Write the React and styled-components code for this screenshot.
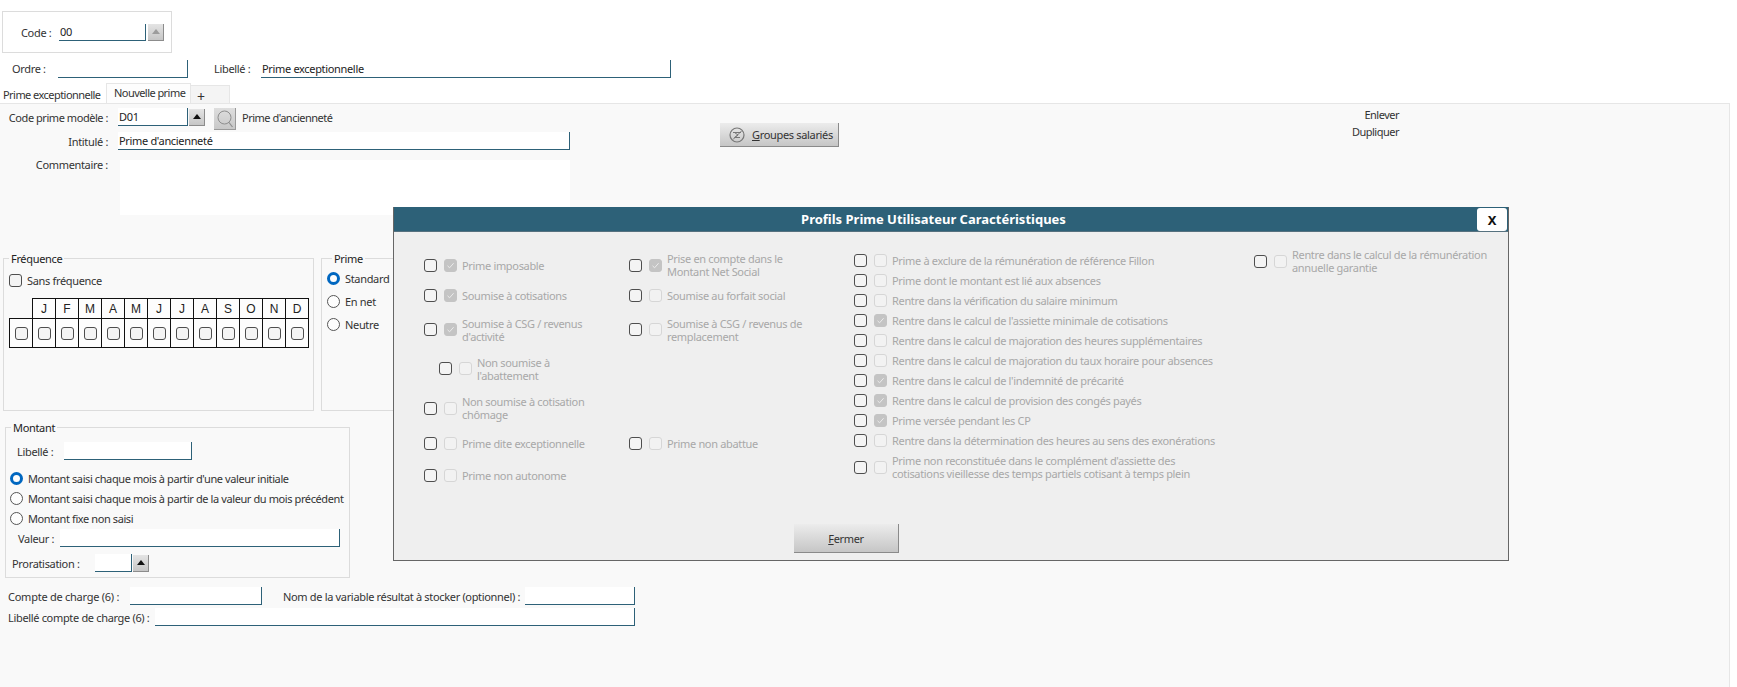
import React from "react";
import styled, { createGlobalStyle } from "styled-components";

const FONT = `"Noto Sans", "Liberation Sans", sans-serif`;
const TEAL = "#2d6178";

const Global = createGlobalStyle`
  html, body { margin: 0; padding: 0; background: #fff; }
  * { box-sizing: border-box; }
`;

const Page = styled.div`
  position: relative;
  width: 1737px;
  height: 687px;
  overflow: hidden;
  display: flex;
  flex-direction: column;
  font: 11px/13px ${FONT};
  letter-spacing: -0.33px;
  color: #333;
  background: #fff;
`;

const CodeBox = styled.div`
  display: flex;
  align-items: center;
  width: 170px;
  height: 42px;
  margin: 11px 0 0 2px;
  padding: 0 0 0 18px;
  border: 1px solid #dcdcdc;
`;

const Label = styled.span`
  flex: none;
  width: ${(p) => (p.$w ? `${p.$w}px` : "auto")};
  margin-left: ${(p) => p.$ml || 0}px;
  margin-right: ${(p) => p.$mr || 0}px;
  letter-spacing: ${(p) => p.$ls || "inherit"};
  text-align: ${(p) => (p.$right ? "right" : "left")};
  white-space: nowrap;
`;

const Input = styled.input`
  flex: none;
  display: block;
  width: ${(p) => p.$w}px;
  height: ${(p) => p.$h || 18}px;
  margin-left: ${(p) => p.$ml || 0}px;
  padding: 0 1px;
  border: 0;
  border-right: 1px solid ${TEAL};
  border-bottom: 1px solid ${TEAL};
  background: #fff;
  font: inherit;
  letter-spacing: inherit;
  color: #222;
  outline: none;
`;

const Spin = styled.button`
  flex: none;
  display: flex;
  align-items: center;
  justify-content: center;
  width: 16px;
  height: 17px;
  margin-left: ${(p) => p.$ml ?? 1}px;
  padding: 0;
  border: 0;
  border-right: 1px solid #8c8c8c;
  border-bottom: 1px solid #8c8c8c;
  background: linear-gradient(#e4e4e4, #c6c6c6);
  &::before {
    content: "";
    border-left: 4px solid transparent;
    border-right: 4px solid transparent;
    border-bottom: 5px solid ${(p) => (p.$disabled ? "#9c9c9c" : "#111")};
  }
`;

const TopRow = styled.div`
  display: flex;
  align-items: center;
  height: 17px;
  margin-top: 7px;
  padding-left: 12px;
`;

const TabBar = styled.div`
  display: flex;
  align-items: flex-end;
  height: 20px;
  margin-top: 6px;
  letter-spacing: -0.55px;
`;

const Tab = styled.div`
  display: flex;
  align-items: center;
  height: ${(p) => (p.$active ? 20 : 18)}px;
  width: ${(p) => p.$w}px;
  padding: ${(p) => (p.$active ? "0 0 3px 7px" : "0 0 0 3px")};
  background: ${(p) => (p.$active ? "#fdfdfd" : p.$plain ? "#fff" : "#f4f4f4")};
  border: 1px solid #e6e6e6;
  border-width: ${(p) => (p.$active ? "1px 1px 0 1px" : p.$plain ? "0" : "1px 1px 0 0")};
  white-space: nowrap;
`;

const PlusSign = styled.span`
  font-size: 14px;
  margin: 3px 0 0 3px;
`;

const Panel = styled.div`
  flex: 1;
  width: 1730px;
  display: flex;
  flex-direction: column;
  background: #f9f9f9;
  border-top: 1px solid #e6e6e6;
  border-right: 1px solid #e6e6e6;
`;

const Header = styled.div`
  display: flex;
  height: 148px;
`;

const FormCol = styled.div`
  width: 570px;
  flex: none;
  padding-top: 4px;
`;

const FormRow = styled.div`
  display: flex;
  align-items: ${(p) => (p.$top ? "flex-start" : "center")};
  height: ${(p) => p.$h || 18}px;
  margin-top: ${(p) => p.$mt || 0}px;
`;

const FormLabel = styled(Label)`
  width: 108px;
  text-align: right;
  margin-right: 10px;
`;

const CommentLabel = styled(FormLabel)`
  margin-top: -2px;
`;

const Comment = styled.textarea`
  display: block;
  width: 450px;
  height: 55px;
  margin-left: 2px;
  border: 0;
  background: #fff;
  resize: none;
  outline: none;
`;

const SearchBtn = styled.button`
  flex: none;
  display: flex;
  align-items: center;
  justify-content: center;
  width: 22px;
  height: 22px;
  margin: 0 6px 0 9px;
  padding: 0;
  align-self: flex-start;
  border: 0;
  border-right: 1px solid #9a9a9a;
  border-bottom: 1px solid #9a9a9a;
  background: linear-gradient(#dedede, #c8c8c8);
`;

const ActionButton = styled.button`
  flex: none;
  display: flex;
  align-items: center;
  justify-content: ${(p) => (p.$center ? "center" : "flex-start")};
  width: ${(p) => p.$w}px;
  height: ${(p) => p.$h}px;
  margin: ${(p) => p.$m || 0};
  padding: ${(p) => (p.$center ? 0 : "0 0 0 9px")};
  gap: 7px;
  border: 0;
  border-right: 1px solid #8a8a8a;
  border-bottom: 1.5px solid #8a8a8a;
  background: linear-gradient(#ececec, #c6c6c6);
  font: inherit;
  letter-spacing: inherit;
  color: #333;
  u { text-decoration: underline; }
`;

const Links = styled.div`
  margin-left: 514px;
  padding-top: 4px;
  width: 46px;
  display: flex;
  flex-direction: column;
  align-items: flex-end;
  gap: 4px;
  letter-spacing: -0.5px;
`;

const GroupsRow = styled.div`
  display: flex;
  gap: 7px;
  padding-left: 3px;
`;

const Group = styled.fieldset`
  width: ${(p) => p.$w}px;
  height: ${(p) => p.$h}px;
  margin: ${(p) => p.$m || 0};
  padding: ${(p) => p.$p || "0"};
  border: 1px solid #dcdcdc;
  min-width: 0;
`;

const Legend = styled.legend`
  padding: 0 2px;
  margin-left: ${(p) => p.$ml ?? 5}px;
  color: #222;
`;

const Check = styled.span`
  flex: none;
  display: inline-flex;
  align-items: center;
  justify-content: center;
  width: 13px;
  height: 13px;
  border-radius: 3px;
  border: ${(p) => (p.$ghost ? "1px solid #d6d6d6" : "1px solid #4e4e4e")};
  background: ${(p) => (p.$checked ? "#c4c4c4" : p.$ghost ? "#f2f2f2" : "#f4f4f4")};
  ${(p) => p.$checked && "border-color: #c4c4c4;"}
  svg { display: block; }
`;

const Radio = styled.span`
  flex: none;
  width: 13px;
  height: 13px;
  border-radius: 50%;
  border: ${(p) => (p.$on ? "3.5px solid #0067c0" : "1px solid #555")};
  background: #fdfdfd;
`;

const OptionRow = styled.div`
  display: flex;
  align-items: center;
  gap: 5px;
  height: ${(p) => p.$h || 23}px;
  margin-left: ${(p) => p.$ml || 0}px;
`;

const MonthTable = styled.table`
  margin: 8px 0 0 5px;
  border-collapse: collapse;
  table-layout: fixed;
  width: 300px;
  th, td {
    width: 23px;
    padding: 0;
    border: 1px solid #111;
    text-align: center;
    background: #fdfdfd;
  }
  th {
    height: 20px;
    font: 400 12px "Liberation Sans", sans-serif;
    letter-spacing: 0;
    color: #222;
  }
  th:first-child { border-width: 0 1px 1px 0; background: transparent; }
  td { height: 29px; vertical-align: middle; }
  td span { vertical-align: middle; }
`;

const FieldLine = styled.div`
  display: flex;
  align-items: center;
  height: ${(p) => p.$h || 18}px;
  margin-top: ${(p) => p.$mt || 0}px;
  padding-left: ${(p) => p.$pl || 0}px;
`;

const RadioList = styled.div`
  display: flex;
  flex-direction: column;
  margin: 8px 0 1px;
  letter-spacing: -0.4px;
`;

const MontantRadio = styled.div`
  display: flex;
  align-items: center;
  gap: 5px;
  height: 20px;
  padding-left: 4px;
`;

const Modal = styled.div`
  position: absolute;
  left: 393px;
  top: 207px;
  width: 1116px;
  height: 354px;
  display: flex;
  flex-direction: column;
  background: #efefef;
  border: 1px solid #666;
  border-top: 0;
`;

const ModalHead = styled.div`
  position: relative;
  flex: none;
  height: 25px;
  display: flex;
  align-items: center;
  justify-content: center;
  background: ${TEAL};
  border-bottom: 1px solid #56717f;
  color: #fff;
  font: 700 13px/1 "Noto Sans", sans-serif;
  letter-spacing: 0;
  padding-right: 35px;
`;

const CloseBtn = styled.button`
  position: absolute;
  right: 1px;
  top: 1px;
  width: 30px;
  height: 23px;
  padding: 0;
  border: 0;
  border-radius: 3px;
  background: #fff;
  color: #111;
  font: 700 13px "Noto Sans", sans-serif;
`;

const ModalBody = styled.div`
  flex: 1;
  display: grid;
  grid-template-columns: 205px 225px 400px 1fr;
  padding: 18px 0 0 30px;
  color: #a8a8a8;
`;

const Column = styled.div`
  display: flex;
  flex-direction: column;
`;

const ProfileRow = styled.div`
  display: flex;
  align-items: center;
  height: ${(p) => p.$h}px;
  margin-left: ${(p) => p.$ml || 0}px;
`;

const ProfileText = styled.span`
  margin-left: 5px;
  white-space: pre-line;
`;

const Spacer = styled.div`
  height: ${(p) => p.$h}px;
`;

const GhostGap = styled.span`
  width: 7px;
  flex: none;
`;

const ModalFoot = styled.div`
  flex: none;
  padding: 0 0 7px 400px;
`;

const Tick = () => (
  <svg width="9" height="9" viewBox="0 0 9 9" fill="none">
    <path d="M1.5 4.8 L3.6 6.8 L7.6 2.2" stroke="#ececec" strokeWidth="1" />
  </svg>
);

const Profile = ({ h, ml, on, children }) => (
  <ProfileRow $h={h} $ml={ml}>
    <Check />
    <GhostGap />
    <Check $ghost $checked={on}>{on && <Tick />}</Check>
    <ProfileText>{children}</ProfileText>
  </ProfileRow>
);

const months = ["J", "F", "M", "A", "M", "J", "J", "A", "S", "O", "N", "D"];

const col1 = [
  [30, "Prime imposable", true],
  [31, "Soumise à cotisations", true],
  [37, "Soumise à CSG / revenus\nd'activité", true],
  [41, "Non soumise à\nl'abattement", false, 15],
  [38, "Non soumise à cotisation\nchômage", false],
  [33, "Prime dite exceptionnelle", false],
  [30, "Prime non autonome", false],
];

const col3 = [
  ["Prime à exclure de la rémunération de référence Fillon", false],
  ["Prime dont le montant est lié aux absences", false],
  ["Rentre dans la vérification du salaire minimum", false],
  ["Rentre dans le calcul de l'assiette minimale de cotisations", true],
  ["Rentre dans le calcul de majoration des heures supplémentaires", false],
  ["Rentre dans le calcul de majoration du taux horaire pour absences", false],
  ["Rentre dans le calcul de l'indemnité de précarité", true],
  ["Rentre dans le calcul de provision des congés payés", true],
  ["Prime versée pendant les CP", true],
  ["Rentre dans la détermination des heures au sens des exonérations", false],
];

export default function App() {
  return (
    <Page>
      <Global />
      <CodeBox>
        <Label $w={38}>Code :</Label>
        <Input $w={87} $h={17} readOnly value="00" />
        <Spin $disabled $ml={2} />
      </CodeBox>
      <TopRow>
        <Label $w={46}>Ordre :</Label>
        <Input $w={130} readOnly value="" />
        <Label $ml={26} $w={47}>Libellé :</Label>
        <Input $w={410} readOnly value="Prime exceptionnelle" />
      </TopRow>
      <TabBar>
        <Tab $w={106} $plain>Prime exceptionnelle</Tab>
        <Tab $w={85} $active>Nouvelle prime</Tab>
        <Tab $w={39}><PlusSign>+</PlusSign></Tab>
      </TabBar>
      <Panel>
        <Header>
          <FormCol>
            <FormRow>
              <FormLabel $ls="-0.45px">Code prime modèle :</FormLabel>
              <Input $w={70} readOnly value="D01" />
              <Spin />
              <SearchBtn aria-label="Rechercher">
                <svg width="18" height="19" viewBox="0 0 18 19" fill="none">
                  <circle cx="8.5" cy="8.5" r="6.5" stroke="#8e8e8e" strokeWidth="1" />
                  <path d="M13 13.5 L16.5 18" stroke="#8e8e8e" strokeWidth="1.2" />
                </svg>
              </SearchBtn>
              <Label $ls="-0.5px">Prime d'ancienneté</Label>
            </FormRow>
            <FormRow $mt={6}>
              <FormLabel>Intitulé :</FormLabel>
              <Input $w={452} readOnly value="Prime d'ancienneté" />
            </FormRow>
            <FormRow $top $mt={10} $h={55}>
              <CommentLabel>Commentaire :</CommentLabel>
              <Comment readOnly />
            </FormRow>
          </FormCol>
          <ActionButton $w={119} $h={24} $m="19px 0 0 150px">
            <svg width="16" height="16" viewBox="0 0 16 16" fill="none" stroke="#777">
              <circle cx="8" cy="8" r="7" strokeWidth="1.2" />
              <path d="M4 5.5 H12 M5.5 5.5 L9 8 L5.5 10.5 H11 M4 12.5 L12.5 4" strokeWidth="1" />
            </svg>
            <span><u>G</u>roupes salariés</span>
          </ActionButton>
          <Links>
            <Label>Enlever</Label>
            <Label>Dupliquer</Label>
          </Links>
        </Header>

        <GroupsRow>
          <Group $w={311} $h={159} $p="5px 0 0 0">
            <Legend>Fréquence</Legend>
            <OptionRow $ml={5} $h={20}>
              <Check />
              <Label>Sans fréquence</Label>
            </OptionRow>
            <MonthTable>
              <thead>
                <tr>
                  <th />
                  {months.map((m, i) => <th key={i}>{m}</th>)}
                </tr>
              </thead>
              <tbody>
                <tr>
                  {Array.from({ length: 13 }, (_, i) => <td key={i}><Check /></td>)}
                </tr>
              </tbody>
            </MonthTable>
          </Group>
          <Group $w={180} $h={159} $p="2px 0 0 5px">
            <Legend>Prime</Legend>
            <OptionRow $h={23}><Radio $on /><Label>Standard</Label></OptionRow>
            <OptionRow $h={23}><Radio /><Label>En net</Label></OptionRow>
            <OptionRow $h={23}><Radio /><Label>Neutre</Label></OptionRow>
          </Group>
        </GroupsRow>

        <Group $w={345} $h={157} $m="10px 0 0 5px">
          <Legend>Montant</Legend>
          <FieldLine $pl={11} $mt={8}>
            <Label $w={47}>Libellé :</Label>
            <Input $w={128} readOnly value="" />
          </FieldLine>
          <RadioList>
            <MontantRadio><Radio $on /><Label>Montant saisi chaque mois à partir d'une valeur initiale</Label></MontantRadio>
            <MontantRadio><Radio /><Label>Montant saisi chaque mois à partir de la valeur du mois précédent</Label></MontantRadio>
            <MontantRadio><Radio /><Label>Montant fixe non saisi</Label></MontantRadio>
          </RadioList>
          <FieldLine $pl={12}>
            <Label $w={42}>Valeur :</Label>
            <Input $w={280} readOnly value="" />
          </FieldLine>
          <FieldLine $pl={6} $mt={7}>
            <Label $w={83}>Proratisation :</Label>
            <Input $w={37} readOnly value="" />
            <Spin />
          </FieldLine>
        </Group>

        <FieldLine $pl={8} $mt={9}>
          <Label $w={122} $ls="-0.25px">Compte de charge (6) :</Label>
          <Input $w={132} readOnly value="" />
          <Label $ml={21} $w={242}>Nom de la variable résultat à stocker (optionnel) :</Label>
          <Input $w={110} readOnly value="" />
        </FieldLine>
        <FieldLine $pl={8} $mt={3}>
          <Label $w={147}>Libellé compte de charge (6) :</Label>
          <Input $w={480} readOnly value="" />
        </FieldLine>
      </Panel>

      <Modal>
        <ModalHead>
          Profils Prime Utilisateur Caractéristiques
          <CloseBtn>X</CloseBtn>
        </ModalHead>
        <ModalBody>
          <Column>
            {col1.map(([h, t, on, ml]) => <Profile key={t} h={h} on={on} ml={ml}>{t}</Profile>)}
          </Column>
          <Column>
            <Profile h={30} on>{"Prise en compte dans le\nMontant Net Social"}</Profile>
            <Profile h={31}>Soumise au forfait social</Profile>
            <Profile h={37}>{"Soumise à CSG / revenus de\nremplacement"}</Profile>
            <Spacer $h={79} />
            <Profile h={33}>Prime non abattue</Profile>
          </Column>
          <Column>
            {col3.map(([t, on]) => <Profile key={t} h={20} on={on}>{t}</Profile>)}
            <Profile h={34}>{"Prime non reconstituée dans le complément d'assiette des\ncotisations vieillesse des temps partiels cotisant à temps plein"}</Profile>
          </Column>
          <Column>
            <Profile h={22}>{"Rentre dans le calcul de la rémunération\nannuelle garantie"}</Profile>
          </Column>
        </ModalBody>
        <ModalFoot>
          <ActionButton $center $w={105} $h={29}><span><u>F</u>ermer</span></ActionButton>
        </ModalFoot>
      </Modal>
    </Page>
  );
}
